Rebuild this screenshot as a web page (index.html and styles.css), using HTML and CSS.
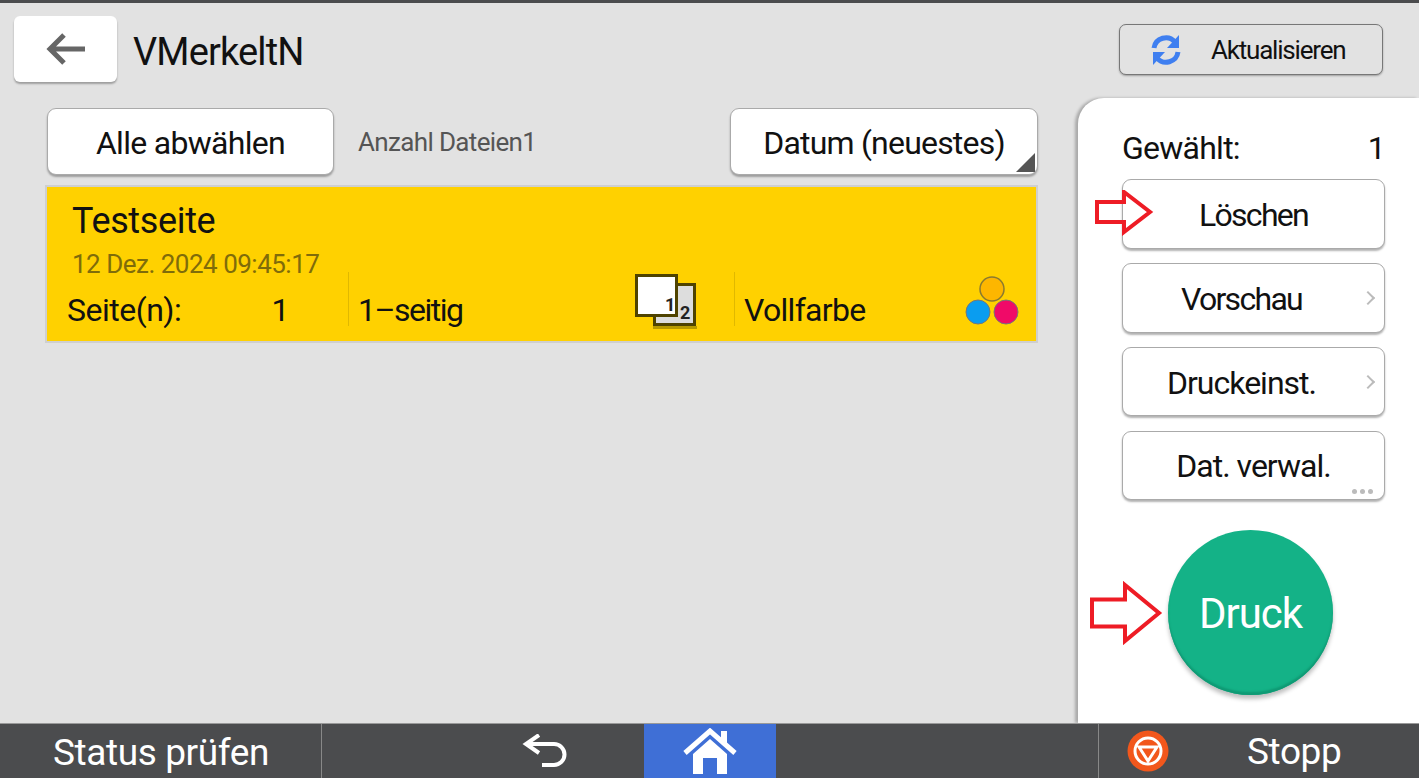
FILE: index.html
```html
<!DOCTYPE html>
<html lang="de">
<head>
    <meta charset="UTF-8">
    <meta name="viewport" content="width=device-width, initial-scale=1.0">
    <title>Druckaufträge</title>
    <link rel="stylesheet" href="styles.css">
</head>
<body>
    <div class="page">
        <div class="main">
            <div class="content">
                <div class="header">
                    <button class="back-btn" type="button">
                        <svg width="42" height="36" viewBox="0 0 42 36"><path d="M40 18H5M19 4 5 18l14 14" fill="none" stroke="#666" stroke-width="5"/></svg>
                    </button>
                    <h1 class="user-name">VMerkeltN</h1>
                </div>
                <div class="toolbar">
                    <button class="btn deselect-btn" type="button">Alle abwählen</button>
                    <span class="file-count">Anzahl Dateien1</span>
                    <button class="btn sort-btn" type="button">Datum (neuestes)</button>
                </div>
                <div class="job">
                    <div class="job-name">Testseite</div>
                    <div class="job-date">12 Dez. 2024 09:45:17</div>
                    <div class="job-info">
                        <div class="cell cell-pages"><span>Seite(n):</span><span>1</span></div>
                        <div class="cell cell-sides">
                            <span class="sides-label">1–seitig</span>
                            <svg class="sides-icon" width="62" height="56" viewBox="0 0 62 56">
                                <rect x="19.5" y="11.5" width="40" height="40" fill="#ddd" stroke="#4f4300" stroke-width="3"/>
                                <rect x="18" y="53" width="44" height="3" fill="#b89a00"/>
                                <rect x="1.5" y="2.5" width="40" height="40" fill="#fff" stroke="#4f4300" stroke-width="3"/>
                                <text x="30" y="38" class="page-num">1</text>
                                <text x="45" y="46" class="page-num">2</text>
                            </svg>
                        </div>
                        <div class="cell cell-color">
                            <span>Vollfarbe</span>
                            <svg class="color-icon" width="54" height="50" viewBox="0 0 54 50">
                                <circle cx="27" cy="13" r="12" fill="#fdb600" stroke="#8a7a30" stroke-width="1.5"/>
                                <circle cx="13" cy="36" r="12" fill="#0a9df0" stroke="#777" stroke-width="1"/>
                                <circle cx="41" cy="36" r="12" fill="#f00a68" stroke="#777" stroke-width="1"/>
                            </svg>
                        </div>
                    </div>
                </div>
            </div>
            <div class="side">
                <div class="refresh-row">
                    <button class="refresh-btn" type="button">
                        <svg width="32" height="32" viewBox="0 0 32 32">
                            <path d="M4 14A12 12 0 0 1 25 8" fill="none" stroke="#3f7ff0" stroke-width="5"/>
                            <path d="M29 1v13H17z" fill="#3f7ff0"/>
                            <path d="M28 18A12 12 0 0 1 7 24" fill="none" stroke="#3f7ff0" stroke-width="5"/>
                            <path d="M3 31V18h12z" fill="#3f7ff0"/>
                        </svg>
                        <span>Aktualisieren</span>
                    </button>
                </div>
                <div class="panel">
                    <div class="selected"><span>Gewählt:</span><span>1</span></div>
                    <button class="btn action-btn tight" type="button">Löschen</button>
                    <button class="btn action-btn has-arrow tight" type="button">Vorschau<i class="chevron"></i></button>
                    <button class="btn action-btn has-arrow" type="button">Druckeinst.<i class="chevron"></i></button>
                    <button class="btn action-btn" type="button">Dat. verwal.<i class="dots"></i></button>
                    <button class="print-btn" type="button">Druck</button>
                </div>
            </div>
        </div>
        <div class="nav">
            <div class="nav-status">Status prüfen</div>
            <div class="nav-back">
                <svg width="46" height="34" viewBox="0 0 46 34"><path d="M4 10h28a10 10 0 0 1 0 21H20M17 1 4 10l13 9" fill="none" stroke="#fff" stroke-width="4"/></svg>
            </div>
            <div class="nav-home">
                <svg width="54" height="46" viewBox="0 0 54 46">
                    <path d="M2 25 27 3l25 22" fill="none" stroke="#fff" stroke-width="5"/>
                    <path d="M38 3h6v14l-6-5z" fill="#fff"/>
                    <path d="M10 26 27 11l17 15v20H34V30H20v16H10z" fill="#fff"/>
                </svg>
            </div>
            <div class="nav-fill"></div>
            <div class="nav-stop">
                <svg width="42" height="42" viewBox="0 0 42 42">
                    <circle cx="21" cy="21" r="20.5" fill="#f2571c"/>
                    <circle cx="21" cy="21" r="13" fill="none" stroke="#fff" stroke-width="3"/>
                    <path d="M12 17h18l-9 14z" fill="none" stroke="#fff" stroke-width="3"/>
                </svg>
                <span>Stopp</span>
            </div>
        </div>

        <svg class="mark mark-delete" width="60" height="46" viewBox="0 0 60 46"><path d="M2 12h27V2l26 20-26 20V32H2z" fill="none" stroke="#ee1c25" stroke-width="4"/></svg>
        <svg class="mark mark-print" width="78" height="64" viewBox="0 0 78 64"><path d="M3 18.5h33V4l34 28-34 28V45.5H3z" fill="none" stroke="#ee1c25" stroke-width="4"/></svg>
    </div>
</body>
</html>
```

FILE: styles.css
```css
* {
    box-sizing: border-box;
}
body {
    margin: 0;
    font-family: Roboto, "Liberation Sans", sans-serif;
    color: #111;
}
button {
    font-family: inherit;
    color: inherit;
    padding: 0;
}
.page {
    position: relative;
    display: flex;
    flex-direction: column;
    height: 100vh;
    background-color: #e2e2e2;
    border-top: 3px solid #4b4c4e;
    overflow: hidden;
}
.main {
    flex: 1;
    display: flex;
    min-height: 0;
}
.content {
    width: 1078px;
    padding: 13px 0 0 0;
}
.header {
    display: flex;
    align-items: center;
    padding-left: 14px;
    gap: 16px;
}
.back-btn {
    width: 103px;
    height: 66px;
    background-color: #fff;
    border: none;
    border-radius: 6px;
    box-shadow: 0 2px 2px rgba(0, 0, 0, 0.3);
    display: flex;
    align-items: center;
    justify-content: center;
}
.user-name {
    margin: 0;
    padding-top: 5px;
    font-size: 38px;
    font-weight: 400;
    letter-spacing: -0.85px;
}
.toolbar {
    display: flex;
    align-items: center;
    margin: 26px 0 0 47px;
    width: 991px;
}
.btn {
    background-color: #fff;
    border: 1px solid #aaa;
    border-radius: 9px;
    box-shadow: 0 2px 2px rgba(0, 0, 0, 0.3);
    font-size: 32px;
    letter-spacing: -0.7px;
    padding-top: 2px;
}
.deselect-btn {
    width: 287px;
    height: 67px;
}
.file-count {
    margin-left: 24px;
    font-size: 26px;
    letter-spacing: -0.65px;
    color: #555;
}
.sort-btn {
    position: relative;
    margin-left: auto;
    width: 308px;
    height: 67px;
    letter-spacing: -0.8px;
}
.sort-btn::after {
    content: "";
    position: absolute;
    right: 2px;
    bottom: 2px;
    border-style: solid;
    border-width: 0 0 19px 19px;
    border-color: transparent transparent #555 transparent;
}
.job {
    width: 993px;
    height: 158px;
    margin: 10px 0 0 45px;
    background-color: #ffd100;
    border: 2px solid #cfcfcf;
    padding: 15px 0 0 25px;
}
.job-name {
    font-size: 36px;
    letter-spacing: -0.35px;
    line-height: 38px;
}
.job-date {
    font-size: 26px;
    letter-spacing: -0.5px;
    line-height: 30px;
    margin-top: 9px;
    color: #7f6c0a;
}
.job-info {
    display: flex;
    margin: -7px 0 0 -5px;
    height: 54px;
    font-size: 32px;
    letter-spacing: -0.5px;
    line-height: 32px;
}
.cell {
    display: flex;
    align-items: flex-end;
    justify-content: space-between;
}
.cell-pages {
    width: 282px;
    padding-right: 59px;
    border-right: 1px solid #e0b800;
}
.cell-sides {
    width: 386px;
    padding: 0 37px 0 9px;
    border-right: 1px solid #e0b800;
}
.sides-label {
    letter-spacing: -1.5px;
}
.sides-icon {
    flex-shrink: 0;
    margin-bottom: -3px;
}
.cell-color {
    width: 290px;
    padding: 0 6px 0 9px;
    letter-spacing: -0.7px;
}
.color-icon {
    flex-shrink: 0;
    margin-top: -2px;
}
.page-num {
    font-size: 18px;
    font-weight: 700;
    font-family: Roboto, sans-serif;
    fill: #222;
}
.side {
    flex: 1;
    display: flex;
    flex-direction: column;
}
.refresh-row {
    padding: 21px 0 0 41px;
}
.refresh-btn {
    width: 264px;
    height: 51px;
    background-color: #e2e2e2;
    border: 1px solid #777;
    border-radius: 7px;
    box-shadow: 0 1px 2px rgba(0, 0, 0, 0.3);
    display: flex;
    align-items: center;
    padding-left: 30px;
    gap: 29px;
    font-size: 26px;
    letter-spacing: -1.2px;
}
.panel {
    flex: 1;
    margin-top: 23px;
    background-color: #fff;
    border-top-left-radius: 26px;
    box-shadow: -3px 0 3px rgba(0, 0, 0, 0.25);
    padding: 28px 34px 0 44px;
    display: flex;
    flex-direction: column;
}
.selected {
    display: flex;
    justify-content: space-between;
    font-size: 32px;
    letter-spacing: -0.75px;
    line-height: 44px;
    margin-bottom: 9px;
}
.action-btn {
    position: relative;
    width: 263px;
    height: 69.7px;
    margin-bottom: 14.2px;
    flex-shrink: 0;
    letter-spacing: -1px;
}
.action-btn.tight {
    letter-spacing: -1.7px;
}
.action-btn.has-arrow {
    padding-right: 24px;
}
.chevron {
    position: absolute;
    right: 11px;
    top: 29px;
    width: 10px;
    height: 10px;
    border-top: 2px solid #bbb;
    border-right: 2px solid #bbb;
    transform: rotate(45deg);
}
.dots {
    position: absolute;
    right: 11px;
    bottom: 5px;
    width: 5px;
    height: 5px;
    border-radius: 50%;
    background-color: #bbb;
    box-shadow: -8px 0 0 #bbb, -16px 0 0 #bbb;
}
.print-btn {
    width: 165px;
    height: 165px;
    margin: 15.4px 0 0 46px;
    padding-top: 3px;
    flex-shrink: 0;
    border: none;
    border-radius: 50%;
    background-color: #14b287;
    color: #fff;
    font-size: 42px;
    letter-spacing: -1px;
    box-shadow: 0 4px 4px rgba(0, 0, 0, 0.25), inset 0 -3px 2px #0f9a74;
}
.nav {
    flex-shrink: 0;
    height: 55px;
    display: flex;
    align-items: stretch;
    background-color: #4b4c4e;
    border-top: 1px solid #999;
    color: #fff;
    font-size: 37px;
    letter-spacing: -0.4px;
}
.nav-status {
    width: 322px;
    padding-left: 53px;
    line-height: 58px;
    border-right: 1px solid #888;
}
.nav-back {
    width: 322px;
    display: flex;
    align-items: center;
    justify-content: flex-end;
    padding-right: 76px;
}
.nav-home {
    width: 132px;
    background-color: #3f6fd6;
    display: flex;
    align-items: center;
    justify-content: center;
}
.nav-fill {
    width: 323px;
    border-right: 1px solid #888;
}
.nav-stop {
    flex: 1;
    display: flex;
    align-items: center;
    padding-left: 28px;
    gap: 78px;
}
.mark {
    position: absolute;
}
.mark-delete {
    left: 1095px;
    top: 187px;
}
.mark-print {
    left: 1089px;
    top: 578px;
}
```
